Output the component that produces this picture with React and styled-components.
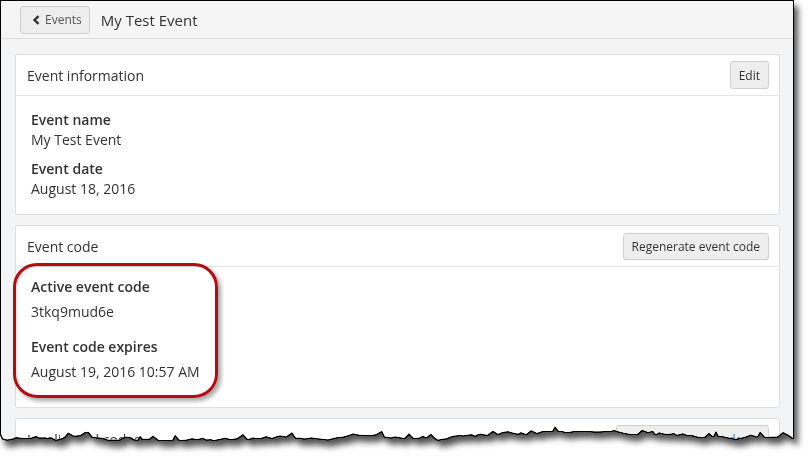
import React from "react"
import styled, { createGlobalStyle } from "styled-components"

const Global = createGlobalStyle`
  html, body {
    margin: 0;
    background: #fff;
  }
  body {
    font-family: "Open Sans", "Liberation Sans", sans-serif;
    color: #333;
  }
`

const SHOT_W = 792
const SHOT_H = 445

// jagged bottom edge of the cropped screenshot
const tornEdge = (() => {
  let seed = 17
  const rand = () => {
    seed = (seed * 16807) % 2147483647
    return seed / 2147483647
  }
  const pts = [`0px 0px`, `${SHOT_W}px 0px`, `${SHOT_W}px 437px`]
  let y = 436
  for (let x = SHOT_W - 4; x > 0; x -= 3 + Math.floor(rand() * 4)) {
    y += (rand() - 0.5) * 4
    y = Math.min(439, Math.max(430, y))
    const spike = rand() < 0.12 ? -2 - rand() * 3 : 0
    pts.push(`${x}px ${(y + spike).toFixed(1)}px`)
  }
  pts.push(`0px 433px`)
  return `polygon(${pts.join(", ")})`
})()

const Stage = styled.div`
  padding: 1px 0 0 1px;
  width: 809px;
  height: 462px;
  box-sizing: border-box;
`

const Outline = styled.div`
  width: ${SHOT_W}px;
  filter: drop-shadow(1px 0 0 #000) drop-shadow(-1px 0 0 #000)
    drop-shadow(0 1px 0 #000) drop-shadow(0 -1px 0 #000)
    drop-shadow(4px 6px 3px rgba(0, 0, 0, 0.68));
`

const Shot = styled.div`
  position: relative;
  width: ${SHOT_W}px;
  height: ${SHOT_H}px;
  background: #f3f4f6;
  clip-path: ${tornEdge};
  overflow: hidden;
`

const TopBar = styled.div`
  display: flex;
  align-items: center;
  gap: 11px;
  height: 37px;
  padding: 0 0 0 19px;
  background: #f5f5f5;
  border-bottom: 1px solid #dcdcdc;
`

const Button = styled.button`
  display: inline-flex;
  align-items: center;
  gap: 4px;
  height: ${(p) => p.$h || 28}px;
  padding: 0 ${(p) => p.$pr || 8}px 0 ${(p) => p.$pl || 8}px;
  font-family: inherit;
  font-size: 12px;
  color: ${(p) => p.$color || "#333"};
  background: #eeeeee;
  border: 1px solid #cfcfcf;
  border-radius: 3px;
  cursor: pointer;
`

const PageTitle = styled.h1`
  margin: 0;
  font-size: 15px;
  font-weight: 400;
  color: #333;
`

const Content = styled.div`
  display: flex;
  flex-direction: column;
  gap: 10px;
  padding: 15px 13px 0 14px;
`

const Panel = styled.section`
  background: #fff;
  border: 1px solid #dde0e3;
  border-radius: 2px;
`

const PanelHeader = styled.div`
  display: flex;
  align-items: center;
  justify-content: space-between;
  height: 40px;
  padding: 0 10px 0 11px;
  border-bottom: 1px solid #e3e5e8;
`

const PanelTitle = styled.h2`
  margin: 0;
  font-size: 14px;
  font-weight: 400;
  color: #333;
`

const PanelBody = styled.div`
  display: flex;
  flex-direction: column;
  gap: ${(p) => p.$gap}px;
  padding: ${(p) => p.$pt}px 15px ${(p) => p.$pb}px;
`

const Field = styled.div`
  display: flex;
  flex-direction: column;
  gap: ${(p) => p.$gap}px;
`

const Label = styled.div`
  font-size: 14px;
  font-weight: 600;
  line-height: 20px;
  color: #333;
`

const Value = styled.div`
  font-size: 14px;
  line-height: 20px;
  color: #333;
`

const Callout = styled.div`
  position: absolute;
  left: 12px;
  top: 262px;
  width: 205px;
  height: 135px;
  box-sizing: border-box;
  border: 3px solid #b30d12;
  border-radius: 24px;
  box-shadow: 3px 3px 4px rgba(0, 0, 0, 0.35),
    inset 1px 1px 2px rgba(0, 0, 0, 0.15);
  pointer-events: none;
`

const Chevron = () => (
  <svg width="9" height="10" viewBox="0 0 9 10">
    <path d="M6.5 1.2 L2.6 5 L6.5 8.8" fill="none" stroke="#333" strokeWidth="2.4" />
  </svg>
)

const App = () => (
  <>
    <Global />
    <Stage>
      <Outline>
        <Shot>
          <TopBar>
            <Button $color="#555" $pl={11} $pr={7}>
              <Chevron />
              Events
            </Button>
            <PageTitle>My Test Event</PageTitle>
          </TopBar>

          <Content>
            <Panel>
              <PanelHeader>
                <PanelTitle>Event information</PanelTitle>
                <Button>Edit</Button>
              </PanelHeader>
              <PanelBody $pt={14} $pb={15} $gap={9}>
                <Field $gap={0}>
                  <Label>Event name</Label>
                  <Value>My Test Event</Value>
                </Field>
                <Field $gap={0}>
                  <Label>Event date</Label>
                  <Value>August 18, 2016</Value>
                </Field>
              </PanelBody>
            </Panel>

            <Panel>
              <PanelHeader>
                <PanelTitle>Event code</PanelTitle>
                <Button $h={27}>Regenerate event code</Button>
              </PanelHeader>
              <PanelBody $pt={10} $pb={25} $gap={15}>
                <Field $gap={5}>
                  <Label>Active event code</Label>
                  <Value>3tkq9mud6e</Value>
                </Field>
                <Field $gap={5}>
                  <Label>Event code expires</Label>
                  <Value>August 19, 2016 10:57 AM</Value>
                </Field>
              </PanelBody>
            </Panel>

            <Panel>
              <PanelHeader>
                <PanelTitle>Invalidated codes</PanelTitle>
                <Button $color="#337ab7" $pl={20} $pr={20}>Deactivate all codes</Button>
              </PanelHeader>
            </Panel>
          </Content>

          <Callout />
        </Shot>
      </Outline>
    </Stage>
  </>
)

export default App
